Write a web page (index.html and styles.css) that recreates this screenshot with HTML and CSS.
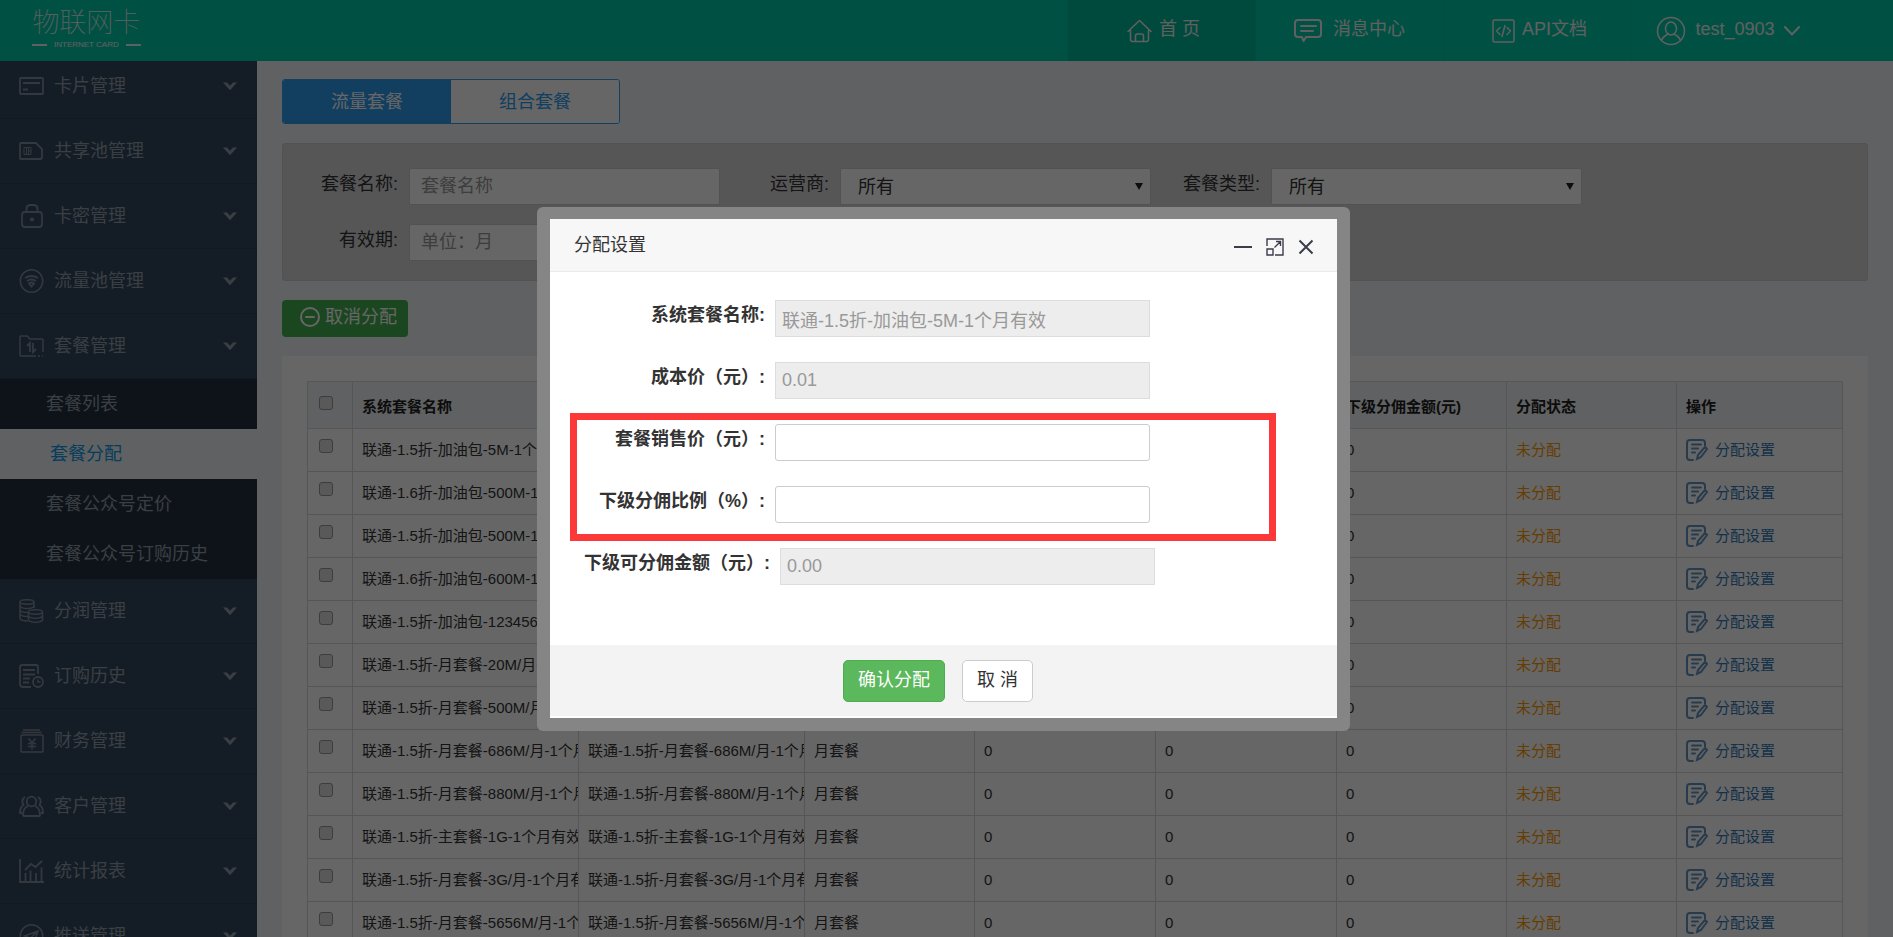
FILE: index.html
```html
<!DOCTYPE html>
<html lang="zh-CN">
<head>
<meta charset="utf-8">
<title>物联网卡</title>
<link rel="stylesheet" href="styles.css">
</head>
<body>
<svg class="sprite" aria-hidden="true">
  <symbol id="i-down" viewBox="0 0 14 9"><path d="M0 .5h4l3 3.2L10 .5h4L7 8.3z" fill="currentColor"/></symbol>
  <symbol id="i-edit" viewBox="0 0 22 22"><g fill="none" stroke="currentColor" stroke-width="2" stroke-linecap="round"><path d="M7 21H4q-3 0-3-3V4q0-3 3-3h12q3 0 3 3v3"/><path d="M6 5.500h9M6 9.500h6M6 13.500h3"/><path d="m11 20 1-4 6-7q2-1 3 1l-6 8z"/></g></symbol>
</svg>
<div class="app">
  <header class="topbar">
    <a class="logo" href="#"><span class="logo-name">物联网卡</span><span class="logo-sub">INTERNET CARD</span></a>
    <nav class="topnav">
      <a class="topnav-item is-active" href="#"><svg width="25" height="24" viewBox="0 0 25 24" class="line"><path d="M1 12.500 12.500 1.500 24 12.500M3.500 11v9.500q0 2 2 2h14q2 0 2-2V11M8.500 22.500V17q0-2 2-2h4q2 0 2 2v5.500"/></svg><span>首 页</span></a>
      <a class="topnav-item topnav-message" href="#"><svg width="28" height="24" viewBox="0 0 28 24" class="line bold"><path d="M4 1h20q3 0 3 3v11q0 3-3 3H12l-2.500 4L8 18H4q-3 0-3-3V4q0-3 3-3zM7 7h15M7 12h12"/></svg><span>消息中心</span></a>
      <a class="topnav-item" href="#"><svg width="23" height="24" viewBox="0 0 23 24" class="line"><rect x="1" y="1" width="21" height="22" rx="1.500"/><path d="m8 8.500-3.500 3.500L8 15.500M15 8.500l3.500 3.500-3.500 3.500M13 6.500l-3 11"/></svg><span>API文档</span></a>
      <a class="topnav-item topnav-user" href="#"><svg width="30" height="30" viewBox="0 0 30 30" class="line"><circle cx="15" cy="15" r="13.500"/><ellipse cx="15" cy="12.500" rx="5.500" ry="6.500"/><path d="M5.500 24.500q1.500-4 6.500-6.500M24.500 24.500q-1.500-4-6.500-6.500"/></svg><span>test_0903</span><svg width="16" height="10" viewBox="0 0 16 10" class="line bold"><path d="m1 1 7 7.500L15 1"/></svg></a>
    </nav>
  </header>
  <aside class="sidebar">
    <ul class="menu">
      <li><a class="menu-item" href="#"><svg class="menu-icon" viewBox="0 0 25 24"><rect x="1" y="4" width="23" height="16" rx="1"/><path d="M4 9h17M4 15.500h5"/></svg><span>卡片管理</span><svg class="caret"><use href="#i-down"/></svg></a></li>
      <li><a class="menu-item" href="#"><svg class="menu-icon" viewBox="0 0 25 24"><path d="M2 4h15l6 6v8q0 2-2 2H2q-1 0-1-1V5q0-1 1-1z"/><path d="M5 8.500h7v7H5zM7.500 8.500v7M9.500 8.500v7M9.500 12H12" stroke-width="1"/></svg><span>共享池管理</span><svg class="caret"><use href="#i-down"/></svg></a></li>
      <li><a class="menu-item" href="#"><svg class="menu-icon" viewBox="0 0 25 24"><rect x="3" y="8" width="20" height="15" rx="3"/><path d="M7.500 8V5q0-4 4-4h3q4 0 4 4v3"/><circle cx="13" cy="15.500" r="1.200"/></svg><span>卡密管理</span><svg class="caret"><use href="#i-down"/></svg></a></li>
      <li><a class="menu-item" href="#"><svg class="menu-icon" viewBox="0 0 25 24"><circle cx="12.500" cy="12" r="11.200" stroke-width="1.500"/><path d="M6 9q6.500-4 13 0M8 12q4.500-3 9 0M10 14.500q2.500-2 5 0l-2.500 3z"/></svg><span>流量池管理</span><svg class="caret"><use href="#i-down"/></svg></a></li>
      <li><a class="menu-item" href="#"><svg class="menu-icon" viewBox="0 0 25 24"><path d="M17 22H2q-1 0-1-1V3q0-1 1-1h6l3 3h12q1 0 1 1v12M19 22h2M23 22h1" stroke-width="1.500"/><path d="m8 12 3-3v9M14 9v9l3-3"/></svg><span>套餐管理</span><svg class="caret"><use href="#i-down"/></svg></a>
        <ul class="submenu">
          <li><a class="submenu-item" href="#">套餐列表</a></li>
          <li><a class="submenu-item is-current" href="#">套餐分配</a></li>
          <li><a class="submenu-item" href="#">套餐公众号定价</a></li>
          <li><a class="submenu-item" href="#">套餐公众号订购历史</a></li>
        </ul>
      </li>
      <li><a class="menu-item" href="#"><svg class="menu-icon" viewBox="0 0 25 24"><g stroke-width="1.500"><ellipse cx="8" cy="3" rx="7" ry="2.200"/><path d="M1 3v16q0 3 8 3M15 3v6M1 7q1 2.500 7 2.500T15 7M1 11q1 2.500 8 2.500M1 15q1 2.500 8 2.500"/><ellipse cx="16.500" cy="13" rx="7" ry="2.200"/><path d="M9.500 13v8q1 2.200 7 2.200t7-2.200v-8M9.500 17q1 2.200 7 2.200t7-2.200"/></g></svg><span>分润管理</span><svg class="caret"><use href="#i-down"/></svg></a></li>
      <li><a class="menu-item" href="#"><svg class="menu-icon" viewBox="0 0 25 24"><path d="M12 23H4q-3 0-3-3V3q0-2 2-2h14q2 0 2 2v7M4 6h12M4 10.500h12M4 14.500h7M4 18.500h6"/><circle cx="19" cy="18" r="5"/><path d="M19 15.500V18h2.500" stroke-width="1.500"/></svg><span>订购历史</span><svg class="caret"><use href="#i-down"/></svg></a></li>
      <li><a class="menu-item" href="#"><svg class="menu-icon" viewBox="0 0 25 24"><g stroke-width="1.500"><path d="M4 1h17M2.500 3.500h20"/><rect x="2" y="6" width="22" height="17" rx="1"/><path d="m9.500 9.500 3.500 4 3.500-4M13 13.500v7M9 14.500h8M9 17.500h8"/></g></svg><span>财务管理</span><svg class="caret"><use href="#i-down"/></svg></a></li>
      <li><a class="menu-item" href="#"><svg class="menu-icon" viewBox="0 0 25 24"><circle cx="12.500" cy="7.500" r="4.800"/><path d="M9 12q-5 2-5 9.500 0 .5 1 .5h15q1 0 1-.5Q21 14 16 12M6 3Q1.500 6 4.500 11 1 13 1 19h2M19 3q4.500 3 1.500 8 3.500 2 3.500 8h-2"/></svg><span>客户管理</span><svg class="caret"><use href="#i-down"/></svg></a></li>
      <li><a class="menu-item" href="#"><svg class="menu-icon" viewBox="0 0 25 24"><path d="M1 0v23h24M6.500 22v-8M11.500 22V11.500M17 22v-8M22.500 22V8.500M6 11l6-6 4.500 3L23 2"/></svg><span>统计报表</span><svg class="caret"><use href="#i-down"/></svg></a></li>
      <li><a class="menu-item" href="#"><svg class="menu-icon" viewBox="0 0 25 24"><circle cx="12.500" cy="12" r="11.200" stroke-width="1.500"/><path d="m5.500 12 13.500-5-3.500 10-4-3zM11.500 14 19 7" stroke-width="1.500"/></svg><span>推送管理</span><svg class="caret"><use href="#i-down"/></svg></a></li>
    </ul>
  </aside>
  <main class="main">
    <div class="tabs">
      <button class="tab is-active" type="button">流量套餐</button>
      <button class="tab" type="button">组合套餐</button>
    </div>
    <form class="filters">
      <div class="filter"><label for="f-name">套餐名称:</label><input id="f-name" class="box" type="text" placeholder="套餐名称"></div>
      <div class="filter"><label for="f-operator">运营商:</label><span class="select"><select id="f-operator" class="box"><option>所有</option></select></span></div>
      <div class="filter"><label for="f-type">套餐类型:</label><span class="select"><select id="f-type" class="box"><option>所有</option></select></span></div>
      <div class="filter"><label for="f-period">有效期:</label><input id="f-period" class="box" type="text" placeholder="单位：月"></div>
    </form>
    <button class="cancel-assign" type="button"><svg width="20" height="20" viewBox="0 0 20 20" class="line bold"><circle cx="10" cy="10" r="9"/><path d="M6 10h8"/></svg><span>取消分配</span></button>
    <section class="card">
      <table class="grid">
        <colgroup><col class="c-check"><col class="c-name"><col class="c-name"><col class="c-kind"><col class="c-money"><col class="c-money"><col class="c-kind"><col class="c-kind"><col class="c-action"></colgroup>
        <thead>
          <tr><th><input type="checkbox" aria-label="全选"></th><th>系统套餐名称</th><th>套餐名称</th><th>套餐类型</th><th>成本价(元)</th><th>销售价(元)</th><th>下级分佣金额(元)</th><th>分配状态</th><th>操作</th></tr>
        </thead>
        <tbody id="rows"></tbody>
      </table>
    </section>
  </main>
</div>
<div class="backdrop">
  <div class="dialog" role="dialog" aria-labelledby="dialog-title">
    <div class="dialog-inner">
      <div class="dialog-head">
        <h2 id="dialog-title">分配设置</h2>
        <div class="dialog-tools">
          <button type="button" aria-label="最小化"><svg width="18" height="18" viewBox="0 0 18 18"><path d="M0 9h18" stroke-width="2"/></svg></button>
          <button type="button" aria-label="最大化"><svg width="18" height="18" viewBox="0 0 18 18"><path d="M1 8V1h16v16H9M1 11h6v6H1zM8.500 9.500 14 4M10 3.500h4.500V8" stroke-width="1.400"/></svg></button>
          <button type="button" aria-label="关闭"><svg width="16" height="18" viewBox="0 0 16 18"><path d="m1.500 2.500 13 13M14.500 2.500l-13 13" stroke-width="2"/></svg></button>
        </div>
      </div>
      <form class="dialog-body" id="assign">
        <div class="row"><label for="d-name">系统套餐名称:</label><input id="d-name" type="text" value="联通-1.5折-加油包-5M-1个月有效" disabled></div>
        <div class="row"><label for="d-cost">成本价（元）:</label><input id="d-cost" type="text" value="0.01" disabled></div>
        <div class="marked">
          <div class="row"><label for="d-price">套餐销售价（元）:</label><input id="d-price" type="text"></div>
          <div class="row"><label for="d-rate">下级分佣比例（%）:</label><input id="d-rate" type="text"></div>
        </div>
        <div class="row"><label for="d-amount">下级可分佣金额（元）:</label><input id="d-amount" type="text" value="0.00" disabled></div>
      </form>
      <div class="dialog-foot">
        <button class="btn btn-ok" type="submit" form="assign">确认分配</button>
        <button class="btn" type="button">取 消</button>
      </div>
    </div>
  </div>
</div>
<script src="app.js"></script>
</body>
</html>
```
FILE: styles.css
```css
* { box-sizing: border-box; }
body {
  margin: 0;
  font: 18px/24px "Liberation Sans", "Noto Sans CJK SC", sans-serif;
  color: #333;
  overflow: hidden;
}
a { color: inherit; text-decoration: none; }
ul { margin: 0; padding: 0; list-style: none; }
button, input, select { font: inherit; color: inherit; margin: 0; }
.sprite { display: none; }
.line { fill: none; stroke: currentColor; stroke-width: 1.5; stroke-linecap: round; stroke-linejoin: round; flex: none; }
.line.bold { stroke-width: 2; }

.app {
  display: grid;
  grid-template: 61px minmax(0, 1fr) / 257px minmax(0, 1fr);
  height: 100vh;
}

/* top bar */
.topbar {
  grid-column: 1 / -1;
  display: flex;
  justify-content: space-between;
  background: #00cba9;
  color: #f0f0f0;
}
.logo {
  display: flex;
  flex-direction: column;
  align-items: center;
  padding: 7px 0 0 32px;
}
.logo-name { font-size: 27px; line-height: 32px; font-weight: 100; }
.logo-sub {
  display: flex;
  align-items: center;
  gap: 7px;
  font-size: 8px;
  line-height: 12px;
}
.logo-sub::before, .logo-sub::after { content: ""; width: 15px; height: 2px; background: #f0f0f0; }
.topnav { display: flex; padding-right: 73px; }
.topnav-item {
  display: flex;
  align-items: center;
  justify-content: center;
  gap: 7px;
  width: 188px;
  padding-left: 4px;
  border-right: 1px solid #00c2a1;
}
.topnav-item span { padding-bottom: 3px; }
.topnav-item:last-child { border-right: 0; }
.topnav-item.is-active { background: #00b99a; }
.topnav-message { gap: 11px; padding-left: 0; }
.topnav-user { gap: 9px; }

/* side menu */
.sidebar { overflow: hidden; background: #34495e; color: #929dab; }
.menu { margin-top: -7px; }
.menu-item {
  display: flex;
  align-items: center;
  gap: 10px;
  height: 65px;
  padding: 0 20px 0 19px;
  border-bottom: 1px solid #2e4154;
}
.menu-item span { flex: 1; }
.menu-icon { width: 25px; height: 24px; fill: none; stroke: #7f8c9b; stroke-width: 1.8; }
.caret { width: 14px; height: 9px; color: #929dab; }
.submenu { background: #23303f; }
.submenu-item { display: block; padding: 13px 0 13px 46px; }
.submenu-item.is-current { padding-left: 50px; background: #eff2f5; color: #109ae6; }

/* content */
.main {
  display: flex;
  flex-direction: column;
  align-items: flex-start;
  overflow: hidden;
  padding: 18px 25px 0;
  background: #eff2f5;
}
.tabs {
  display: flex;
  flex: none;
  border: 1px solid #2d9cf0;
  border-radius: 3px;
  overflow: hidden;
}
.tab { width: 168px; height: 43px; padding: 0; border: 0; background: #fff; color: #2d9cf0; }
.tab.is-active { background: #2d9cf0; color: #fff; }
.filters {
  display: flex;
  flex: none;
  flex-wrap: wrap;
  align-self: stretch;
  gap: 19px 0;
  margin-top: 19px;
  padding: 24px 220px 19px 6px;
  border: 1px solid #ccccd0;
  border-radius: 3px;
  background: #d6d6d9;
}
.filter { display: flex; gap: 11px; width: 431px; }
.filter label { width: 109px; text-align: right; line-height: 32px; }
.select { position: relative; display: flex; }
.select::after {
  content: "";
  position: absolute;
  top: 15px;
  right: 8px;
  border: solid transparent;
  border-width: 7px 4px 0;
  border-top-color: #222;
}
.box {
  width: 311px;
  height: 37px;
  padding: 0 11px;
  border: 1px solid #ccc;
  border-radius: 2px;
  background: #fff;
  appearance: none;
}
select.box { padding-left: 17px; }
.box::placeholder { color: #999; opacity: 1; }
.cancel-assign {
  display: flex;
  flex: none;
  align-items: center;
  gap: 5px;
  height: 37px;
  margin: 19px 0;
  padding: 0 11px 4px 18px;
  border: 0;
  border-radius: 4px;
  background: #43af50;
  color: #fff;
}
.card { align-self: stretch; flex: none; padding: 25px; background: #fff; }
.grid {
  width: 100%;
  table-layout: fixed;
  border-collapse: collapse;
  font-size: 15px;
}
.grid th, .grid td {
  height: 43px;
  padding: 0 0 0 9px;
  border: 1px solid #d8d8d8;
  text-align: left;
  white-space: nowrap;
  overflow: hidden;
}
.grid th { height: 47px; padding-top: 4px; background: #eff2f5; color: #222; }
.c-check { width: 45px; }
.c-name { width: 226px; }
.c-kind { width: 170px; }
.c-money { width: 181px; }
.c-action { width: 166px; }
.grid input {
  display: block;
  width: 14px;
  height: 14px;
  margin: 0 0 8px 2px;
  border: 1px solid #989898;
  border-radius: 3px;
  background: #dedede;
  appearance: none;
}
.pending { color: #f90; }
.action { display: flex; align-items: center; gap: 7px; color: #337ab7; }
.action svg { width: 22px; height: 22px; color: #6495c0; }

/* dialog */
.backdrop {
  position: fixed;
  inset: 0;
  display: flex;
  align-items: flex-start;
  justify-content: center;
  padding: 207px 6px 0 0;
  background: rgba(0, 0, 0, .6);
}
.dialog { width: 813px; padding: 12px 13px 13px; border-radius: 6px; background: #858585; }
.dialog-inner { padding-bottom: 2px; background: #fff; }
.dialog-head {
  display: flex;
  align-items: center;
  justify-content: space-between;
  height: 53px;
  padding: 0 23px 0 24px;
  border-bottom: 1px solid #eaeaea;
  background: #f7f7f7;
}
.dialog-head h2 { margin: 0; font-size: 18px; font-weight: 400; }
.dialog-tools { display: flex; gap: 14px; }
.dialog-tools button { display: flex; padding: 4px 0 0; border: 0; background: none; }
.dialog-tools svg { fill: none; stroke: #3d3c4c; }
.dialog-body {
  display: flex;
  flex-direction: column;
  gap: 25px;
  padding: 28px 34px 60px;
}
.marked { position: relative; display: flex; flex-direction: column; gap: 25px; }
.marked::after {
  content: "";
  position: absolute;
  inset: -11px 27px -18px -14px;
  border: 7px solid #fd3838;
  pointer-events: none;
}
.row { display: flex; gap: 10px; }
.row label { min-width: 181px; text-align: right; font-weight: 700; line-height: 30px; }
.row input {
  width: 375px;
  height: 37px;
  padding: 0 6px;
  border: 1px solid #ccc;
  border-radius: 3px;
  background: #fff;
}
.row input:disabled { border-color: #ddd; border-radius: 0; background: #ededed; color: #999; }
.dialog-foot {
  display: flex;
  justify-content: center;
  gap: 17px;
  padding: 15px 11px 14px 0;
  background: #f3f3f3;
}
.btn {
  height: 42px;
  padding: 0 14px 2px;
  border: 1px solid #ccc;
  border-radius: 5px;
  background: #fff;
}
.btn-ok { border-color: #4cae4c; background: #5cb85c; color: #fff; }
```
FILE: app.js
```js
const plans = [
  ["联通-1.5折-加油包-5M-1个月有效", "加油包"],
  ["联通-1.6折-加油包-500M-1个月有效", "加油包"],
  ["联通-1.5折-加油包-500M-1个月有效", "加油包"],
  ["联通-1.6折-加油包-600M-1个月有效", "加油包"],
  ["联通-1.5折-加油包-123456M-1个月有效", "加油包"],
  ["联通-1.5折-月套餐-20M/月-1个月有效", "月套餐"],
  ["联通-1.5折-月套餐-500M/月-1个月有效", "月套餐"],
  ["联通-1.5折-月套餐-686M/月-1个月有效", "月套餐"],
  ["联通-1.5折-月套餐-880M/月-1个月有效", "月套餐"],
  ["联通-1.5折-主套餐-1G-1个月有效", "月套餐"],
  ["联通-1.5折-月套餐-3G/月-1个月有效", "月套餐"],
  ["联通-1.5折-月套餐-5656M/月-1个月有效", "月套餐"]
];

document.getElementById("rows").innerHTML = plans.map(([name, kind]) => `
  <tr>
    <td><input type="checkbox" aria-label="${name}"></td>
    <td>${name}</td><td>${name}</td><td>${kind}</td>
    <td>0</td><td>0</td><td>0</td>
    <td class="pending">未分配</td>
    <td><a class="action" href="#"><svg><use href="#i-edit"/></svg>分配设置</a></td>
  </tr>`).join("");
```
